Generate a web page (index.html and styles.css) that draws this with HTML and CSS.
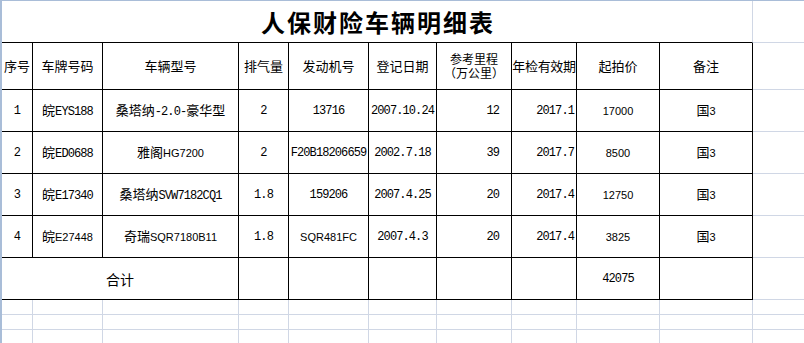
FILE: index.html
```html
<!DOCTYPE html>
<html lang="zh-CN">
<head>
<meta charset="utf-8">
<title>人保财险车辆明细表</title>
<link rel="stylesheet" href="styles.css">
</head>
<body>
<div class="sheet">
  <div class="cell title"><span class="v">人保财险车辆明细表</span></div>
  <div class="cell"></div>

  <div class="cell bk"><span class="v">序号</span></div>
  <div class="cell bk"><span class="v">车牌号码</span></div>
  <div class="cell bk"><span class="v">车辆型号</span></div>
  <div class="cell bk"><span class="v">排气量</span></div>
  <div class="cell bk"><span class="v">发动机号</span></div>
  <div class="cell bk"><span class="v">登记日期</span></div>
  <div class="cell bk"><span class="v two">参考里程<br>（万公里）</span></div>
  <div class="cell bk"><span class="v tight">年检有效期</span></div>
  <div class="cell bk"><span class="v">起拍价</span></div>
  <div class="cell bk"><span class="v">备注</span></div>
  <div class="cell"></div>

  <div class="cell bk"><span class="v m">1</span></div>
  <div class="cell bk"><span class="v">皖<span class="m">EYS188</span></span></div>
  <div class="cell bk"><span class="v">桑塔纳<span class="m">-2.0-</span>豪华型</span></div>
  <div class="cell bk"><span class="v m">2</span></div>
  <div class="cell bk"><span class="v m">13716</span></div>
  <div class="cell bk"><span class="v m">2007.10.24</span></div>
  <div class="cell bk r km"><span class="v m">12</span></div>
  <div class="cell bk r yr"><span class="v m">2017.1</span></div>
  <div class="cell bk"><span class="v a">17000</span></div>
  <div class="cell bk"><span class="v">国<span class="a">3</span></span></div>
  <div class="cell"></div>

  <div class="cell bk"><span class="v m">2</span></div>
  <div class="cell bk"><span class="v">皖<span class="m">ED0688</span></span></div>
  <div class="cell bk"><span class="v">雅阁<span class="a">HG7200</span></span></div>
  <div class="cell bk"><span class="v m">2</span></div>
  <div class="cell bk"><span class="v m">F20B18206659</span></div>
  <div class="cell bk"><span class="v m">2002.7.18</span></div>
  <div class="cell bk r km"><span class="v m">39</span></div>
  <div class="cell bk r yr"><span class="v m">2017.7</span></div>
  <div class="cell bk"><span class="v a">8500</span></div>
  <div class="cell bk"><span class="v">国<span class="a">3</span></span></div>
  <div class="cell"></div>

  <div class="cell bk"><span class="v m">3</span></div>
  <div class="cell bk"><span class="v">皖<span class="m">E17340</span></span></div>
  <div class="cell bk"><span class="v">桑塔纳<span class="m">SVW7182CQ1</span></span></div>
  <div class="cell bk"><span class="v m">1.8</span></div>
  <div class="cell bk"><span class="v m">159206</span></div>
  <div class="cell bk"><span class="v m">2007.4.25</span></div>
  <div class="cell bk r km"><span class="v m">20</span></div>
  <div class="cell bk r yr"><span class="v m">2017.4</span></div>
  <div class="cell bk"><span class="v a">12750</span></div>
  <div class="cell bk"><span class="v">国<span class="a">3</span></span></div>
  <div class="cell"></div>

  <div class="cell bk"><span class="v m">4</span></div>
  <div class="cell bk"><span class="v">皖<span class="a">E27448</span></span></div>
  <div class="cell bk"><span class="v">奇瑞<span class="a">SQR7180B11</span></span></div>
  <div class="cell bk"><span class="v m">1.8</span></div>
  <div class="cell bk"><span class="v a">SQR481FC</span></div>
  <div class="cell bk"><span class="v m">2007.4.3</span></div>
  <div class="cell bk r km"><span class="v m">20</span></div>
  <div class="cell bk r yr"><span class="v m">2017.4</span></div>
  <div class="cell bk"><span class="v a">3825</span></div>
  <div class="cell bk"><span class="v">国<span class="a">3</span></span></div>
  <div class="cell"></div>

  <div class="cell bk span3"><span class="v total">合计</span></div>
  <div class="cell bk"></div>
  <div class="cell bk"></div>
  <div class="cell bk"></div>
  <div class="cell bk"></div>
  <div class="cell bk"></div>
  <div class="cell bk"><span class="v m">42075</span></div>
  <div class="cell bk"></div>
  <div class="cell"></div>

  <div class="cell"></div><div class="cell"></div><div class="cell"></div><div class="cell"></div><div class="cell"></div><div class="cell"></div><div class="cell"></div><div class="cell"></div><div class="cell"></div><div class="cell"></div><div class="cell"></div>
  <div class="cell"></div><div class="cell"></div><div class="cell"></div><div class="cell"></div><div class="cell"></div><div class="cell"></div><div class="cell"></div><div class="cell"></div><div class="cell"></div><div class="cell"></div><div class="cell"></div>
  <div class="cell"></div><div class="cell"></div><div class="cell"></div><div class="cell"></div><div class="cell"></div><div class="cell"></div><div class="cell"></div><div class="cell"></div><div class="cell"></div><div class="cell"></div><div class="cell"></div>
</div>
</body>
</html>
```
FILE: styles.css
```css
html, body {
  margin: 0;
  padding: 0;
  background: #ffffff;
  overflow: hidden;
}

body {
  width: 804px;
  height: 343px;
  font-family: "Noto Sans CJK SC", "Noto Sans", sans-serif;
  font-size: 13px;
  color: #000000;
}

.sheet {
  display: grid;
  grid-template-columns: 31px 70px 136px 50px 80px 68px 75px 65px 83px 93px 60px;
  grid-template-rows: 42px 47px 42px 42px 42px 42px 42px 15px 15px 15px;
  width: max-content;
  border-top: 1px solid #a9bdd8;
  border-left: 2px solid #a9bdd8;
}

.cell {
  box-sizing: border-box;
  border-right: 1px solid #d0d7e5;
  border-bottom: 1px solid #d0d7e5;
  display: flex;
  align-items: center;
  justify-content: center;
  overflow: hidden;
  white-space: nowrap;
}

.bk {
  border-right-color: #000000;
  border-bottom-color: #000000;
}

.v {
  display: block;
  line-height: 16px;
}

.title {
  grid-column: 1 / 11;
  border-bottom-color: #000000;
  font-size: 24px;
  font-weight: 700;
  letter-spacing: 2px;
  padding-left: 2px;
}

.title .v {
  line-height: 30px;
}

.span3 {
  grid-column: 1 / 4;
}

.total {
  font-size: 14px;
}

.two {
  text-align: center;
  font-size: 12px;
  line-height: 14px;
}

.tight {
  letter-spacing: -0.3px;
}

.r {
  justify-content: flex-end;
}

.km {
  padding-right: 12px;
}

.yr {
  padding-right: 2px;
}

.m {
  font-family: "Liberation Mono", "DejaVu Sans Mono", monospace;
  font-size: 12px;
  letter-spacing: -0.9px;
}

.a {
  font-family: "Liberation Sans", Arial, sans-serif;
  font-size: 11px;
}
```
